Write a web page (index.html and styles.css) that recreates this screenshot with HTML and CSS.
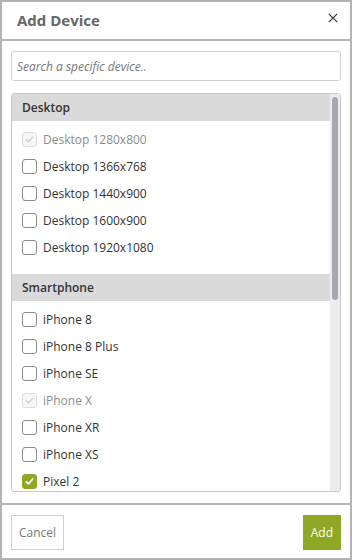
FILE: index.html
```html
<!DOCTYPE html>
<html>
<head>
<meta charset="utf-8">
<link rel="stylesheet" href="styles.css">
</head>
<body>
<div class="modal">
  <div class="header">
    <h1 class="title">Add Device</h1>
    <button class="close" aria-label="Close">
      <svg width="10" height="10" viewBox="0 0 10 10"><path d="M0.8 0.8 L9.2 9.2 M9.2 0.8 L0.8 9.2" stroke="#333" stroke-width="1.2" fill="none"/></svg>
    </button>
  </div>
  <div class="body">
    <input class="search" type="text" placeholder="Search a specific device..">
    <div class="list">
      <div class="list-content">
        <div class="group-head">Desktop</div>
        <div class="items">
          <label class="item disabled"><span class="cb"><svg viewBox="0 0 15 15"><path d="M3.8 7.8 L6.3 10.2 L11.2 4.8"/></svg></span>Desktop 1280x800</label>
          <label class="item"><span class="cb"></span>Desktop 1366x768</label>
          <label class="item"><span class="cb"></span>Desktop 1440x900</label>
          <label class="item"><span class="cb"></span>Desktop 1600x900</label>
          <label class="item"><span class="cb"></span>Desktop 1920x1080</label>
        </div>
        <div class="group-head">Smartphone</div>
        <div class="items">
          <label class="item"><span class="cb"></span>iPhone 8</label>
          <label class="item"><span class="cb"></span>iPhone 8 Plus</label>
          <label class="item"><span class="cb"></span>iPhone SE</label>
          <label class="item disabled"><span class="cb"><svg viewBox="0 0 15 15"><path d="M3.8 7.8 L6.3 10.2 L11.2 4.8"/></svg></span>iPhone X</label>
          <label class="item"><span class="cb"></span>iPhone XR</label>
          <label class="item"><span class="cb"></span>iPhone XS</label>
          <label class="item checked"><span class="cb"><svg viewBox="0 0 15 15"><path d="M3.8 7.8 L6.3 10.2 L11.2 4.8"/></svg></span>Pixel 2</label>
        </div>
      </div>
      <div class="scrollbar"><div class="thumb"></div></div>
    </div>
  </div>
  <div class="footer">
    <button class="btn cancel">Cancel</button>
    <button class="btn add">Add</button>
  </div>
</div>
</body>
</html>
```

FILE: styles.css
```css
* { box-sizing: border-box; }
html, body { margin: 0; padding: 0; background: #fff; }
body { font-family: "Open Sans", "DejaVu Sans", sans-serif; color: #333; }

.modal {
  width: 352px;
  height: 560px;
  border: 2px solid #b3b3b3;
  display: flex;
  flex-direction: column;
  background: #fff;
}

.header {
  height: 39px;
  border-bottom: 2px solid #b3b3b3;
  display: flex;
  align-items: center;
  justify-content: space-between;
  padding: 0 12px 0 15px;
  flex: none;
}
.title {
  margin: 0;
  font-size: 15px;
  font-weight: 700;
  color: #666;
  line-height: 1;
}
.close {
  border: 0;
  background: transparent;
  padding: 0;
  width: 10px;
  height: 10px;
  margin-top: -6px;
  display: flex;
}

.body {
  flex: 1;
  min-height: 0;
  display: flex;
  flex-direction: column;
  gap: 12px;
  padding: 10px 9px 11px;
}
.search {
  flex: none;
  height: 30px;
  width: 100%;
  border: 1px solid #cfcfcf;
  border-radius: 3px;
  padding: 0 5px;
  font-family: "Open Sans", sans-serif;
  font-size: 12px;
  font-style: italic;
  color: #333;
  outline: none;
}
.search::placeholder { color: #777; font-style: italic; }

.list {
  flex: 1;
  min-height: 0;
  border: 1px solid #c8c8c8;
  border-radius: 3px;
  overflow: hidden;
  display: flex;
}
.list-content {
  flex: 1;
  min-width: 0;
  overflow: hidden;
}
.scrollbar {
  flex: none;
  width: 10px;
  background: #ececee;
  padding: 3px 2px 0;
}
.thumb {
  height: 203px;
  background: #a5a9af;
  border-radius: 3px;
}

.group-head {
  height: 27px;
  background: #dadada;
  display: flex;
  align-items: center;
  padding-left: 10px;
  font-size: 12px;
  font-weight: 600;
  color: #333;
}
.items {
  padding: 5px 0 13px;
  display: flex;
  flex-direction: column;
}
.item {
  height: 27px;
  flex: none;
  display: flex;
  align-items: center;
  gap: 6px;
  padding-left: 10px;
  font-size: 12px;
  color: #333;
}
.cb {
  width: 15px;
  height: 15px;
  border: 1px solid #8a8a8a;
  border-radius: 3px;
  background: #fff;
  flex: none;
  display: flex;
}
.cb svg { width: 13px; height: 13px; }
.cb path { fill: none; stroke-width: 2; stroke-linecap: round; stroke-linejoin: round; }
.item.disabled { color: #8c8c8c; }
.item.disabled .cb { border-color: #dcdcdc; background: #f6f6f6; }
.item.disabled .cb path { stroke: #cfcfcf; stroke-width: 1.6; }
.item.checked .cb { border-color: #8ea825; background: #8ea825; }
.item.checked .cb path { stroke: #fff; }

.footer {
  flex: none;
  border-top: 2px solid #b3b3b3;
  padding: 10px 9px 8px;
  display: flex;
  justify-content: space-between;
  align-items: flex-start;
}
.btn {
  height: 35px;
  padding: 0 7px;
  font-family: "Open Sans", sans-serif;
  font-size: 12px;
  border-radius: 0;
  cursor: pointer;
}
.cancel {
  background: #fff;
  border: 1px solid #cfcfcf;
  color: #777;
}
.add {
  background: #8ea825;
  border: 1px solid #8ea825;
  color: #fff;
}
```
